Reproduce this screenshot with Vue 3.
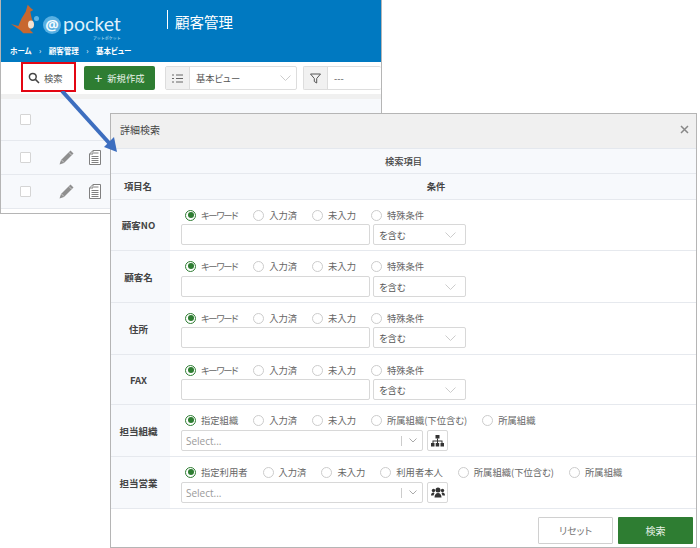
<script setup>
const keywordOptions = ['キーワード', '入力済', '未入力', '特殊条件']

const textRows = [
  { label: '顧客NO', height: 51, tall: false },
  { label: '顧客名', height: 52, tall: true },
  { label: '住所', height: 52, tall: false },
  { label: 'FAX', height: 50, tall: false }
]

const selectRows = [
  {
    label: '担当組織',
    height: 52,
    options: ['指定組織', '入力済', '未入力', '所属組織(下位含む)', '所属組織'],
    icon: 'tree'
  },
  {
    label: '担当営業',
    height: 52,
    options: ['指定利用者', '入力済', '未入力', '利用者本人', '所属組織(下位含む)', '所属組織'],
    icon: 'users'
  }
]

const listRows = [1, 2]
</script>

<template>
  <div class="canvas">
    <div class="window">
      <header class="top">
        <div class="brand">
          <svg class="roo" width="26" height="32" viewBox="0 0 26 32">
            <path d="M16.700 1.700L20 5.300L22.300 7L19.300 8.700L20.700 15.300L23.300 22L19 27L22.300 30.300L12.300 30.300L9 27L0 21L7.300 23L10.700 15.300L14.700 8.700L15.700 5.300Z" fill="#c8672f" />
            <ellipse cx="20" cy="21.500" rx="3" ry="4" fill="#f5e3d2" />
          </svg>
          <span class="at">@</span>
          <span class="logo-word">
            <span>pocket</span>
            <small>アットポケット</small>
          </span>
        </div>
        <h1 class="app-title">顧客管理</h1>
        <nav class="crumbs">
          <span>ホーム</span><i>›</i><span>顧客管理</span><i>›</i><span>基本ビュー</span>
        </nav>
      </header>

      <div class="toolbar">
        <button class="search-btn">
          <svg width="12" height="12" viewBox="0 0 12 12" fill="none" stroke="#444" stroke-width="1.5">
            <circle cx="4.800" cy="4.800" r="3.400" />
            <path d="M7.400 7.400L11 11" />
          </svg>
          検索
        </button>
        <button class="new-btn"><b>+</b>新規作成</button>
        <div class="view-select">
          <span class="addon">
            <svg width="11" height="9" viewBox="0 0 11 9" stroke="#666" fill="none"><path d="M0 1h2M4 1h7M0 4.500h2M4 4.500h7M0 8h2M4 8h7" /></svg>
          </span>
          <span class="view-name">基本ビュー</span>
          <svg class="chev" width="11" height="6" viewBox="0 0 11 6" fill="none" stroke="#ccc"><path d="M.5.500l5 5 5-5" /></svg>
        </div>
        <div class="filter-select">
          <span class="addon">
            <svg width="11" height="11" viewBox="0 0 11 11" fill="none" stroke="#555"><path d="M.5 1h10L6.700 5.500V10L4.300 8.500v-3z" /></svg>
          </span>
          <span class="view-name">---</span>
        </div>
      </div>

      <div class="list">
        <div class="list-head"><span class="check"></span></div>
        <div v-for="row in listRows" :key="row" class="list-row">
          <span class="check"></span>
          <svg class="pen" width="15" height="15" viewBox="0 0 15 15">
            <path d="M11.500.500l3 3-9.500 9.500-4.500 1.500 1.500-4.500z" fill="#8f8f8f" />
            <path d="M10 2.500l2.500 2.500M2.500 10l2.500 2.500" stroke="#e8e8e8" stroke-width=".7" />
          </svg>
          <svg width="12" height="15" viewBox="0 0 12 15" fill="#fff" stroke="#808080">
            <path d="M4 .500h7.500v14H.5V4z" />
            <path d="M4 .500V4H.5M5 3h4.500M2.500 6.500h7M2.500 8.500h7M2.500 10.500h7M2.500 12.500h7" fill="none" />
          </svg>
        </div>
      </div>
    </div>

    <div class="callout"></div>

    <svg class="arrow" width="66" height="66" viewBox="0 0 66 66">
      <path d="M3 0l48 53" stroke="#3d6ebf" stroke-width="4" fill="none" />
      <path d="M58 61l-13-5 10-10z" fill="#3d6ebf" />
    </svg>

    <section class="dialog">
      <div class="dialog-title">
        <span>詳細検索</span>
        <svg width="9" height="9" viewBox="0 0 9 9" stroke="#888" stroke-width="1.500"><path d="M1 1l7 7M8 1L1 8" /></svg>
      </div>
      <div class="band">検索項目</div>
      <div class="col-head">
        <span class="col-name">項目名</span>
        <span class="col-cond">条件</span>
      </div>

      <div
        v-for="row in textRows"
        :key="row.label"
        class="row"
        :class="{ tall: row.tall }"
        :style="{ height: row.height + 'px' }"
      >
        <div class="row-label">{{ row.label }}</div>
        <div class="row-body">
          <div class="radios">
            <label
              v-for="(opt, i) in keywordOptions"
              :key="opt"
              class="radio"
              :class="{ narrow: opt === 'キーワード' }"
            >
              <span class="dot" :class="{ on: i === 0 }"></span>{{ opt }}
            </label>
          </div>
          <div class="fields">
            <div class="input"></div>
            <div class="match">を含む
              <svg width="11" height="6" viewBox="0 0 11 6" fill="none" stroke="#ccc"><path d="M.5.500l5 5 5-5" /></svg>
            </div>
          </div>
        </div>
      </div>

      <div
        v-for="row in selectRows"
        :key="row.label"
        class="row tall"
        :style="{ height: row.height + 'px' }"
      >
        <div class="row-label">{{ row.label }}</div>
        <div class="row-body">
          <div class="radios">
            <label v-for="(opt, i) in row.options" :key="opt" class="radio">
              <span class="dot" :class="{ on: i === 0 }"></span>{{ opt }}
            </label>
          </div>
          <div class="fields">
            <div class="picker">
              <span>Select...</span>
              <em></em>
              <svg width="8" height="5" viewBox="0 0 8 5" fill="none" stroke="#aaa"><path d="M.5.500L4 4 7.500.500" /></svg>
            </div>
            <button class="pick-btn">
              <svg v-if="row.icon === 'tree'" width="13" height="12" viewBox="0 0 13 12" fill="#333">
                <rect x="4.500" y="0" width="4" height="3.500" />
                <path d="M6 3.500h1V5.500h4.500V8h-1V6.500H7V8H6V6.500H2.500V8h-1V5.500H6z" />
                <rect x="0" y="8" width="3.500" height="3.500" />
                <rect x="4.700" y="8" width="3.500" height="3.500" />
                <rect x="9.500" y="8" width="3.500" height="3.500" />
              </svg>
              <svg v-else width="14" height="11" viewBox="0 0 14 11" fill="#333">
                <circle cx="7" cy="3" r="2.500" />
                <circle cx="2.500" cy="3.500" r="1.700" />
                <circle cx="11.500" cy="3.500" r="1.700" />
                <path d="M3.500 10.500c0-3 1.500-4.500 3.500-4.500s3.500 1.500 3.500 4.500zM0 8.500c0-2 1-3 2.500-3l1 .5-1 2.500zM14 8.500c0-2-1-3-2.500-3l-1 .5 1 2.500z" />
              </svg>
            </button>
          </div>
        </div>
      </div>

      <footer class="dialog-foot">
        <button class="reset">リセット</button>
        <button class="go">検索</button>
      </footer>
    </section>
  </div>
</template>

<style>
html,
body {
  margin: 0;
  background: #fff;
}
</style>

<style scoped>
.canvas {
  position: relative;
  width: 700px;
  height: 548px;
  overflow: hidden;
  background: #fff;
  font-family: "Noto Sans CJK JP", "Noto Sans", sans-serif;
  font-feature-settings: "palt";
  font-size: 9.3px;
  color: #555;
}

button {
  font-family: inherit;
  font-feature-settings: inherit;
  cursor: pointer;
}

.window {
  position: absolute;
  left: 0;
  top: 0;
  width: 382px;
  height: 214px;
  border-left: 1px solid #b5b5b5;
  border-right: 1px solid #b5b5b5;
  border-bottom: 1px solid #b5b5b5;
  box-sizing: border-box;
  overflow: hidden;
}

.top {
  height: 62px;
  background: #0079c1;
  color: #fff;
  display: grid;
  grid-template-columns: 166px auto;
  grid-template-rows: 42px 20px;
}

.brand {
  position: relative;
  display: flex;
  align-items: flex-start;
  padding: 3px 0 0 10px;
}

.brand::before {
  content: "";
  position: absolute;
  left: 33px;
  top: 16px;
  width: 5px;
  height: 5px;
  border-radius: 50%;
  background: #5db4e4;
}

.at {
  margin: 13px 0 0 6px;
  width: 18px;
  height: 18px;
  text-align: center;
  border-radius: 50%;
  background: #58b0e2;
  color: #f2fafe;
  font: 700 15px/17px "Noto Sans", sans-serif;
}

.logo-word {
  margin: 11px 0 0 2px;
  display: flex;
  flex-direction: column;
  align-items: flex-end;
  font: 400 19.500px/20px "Lato", sans-serif;
  color: #dff0fa;
}

.logo-word small {
  margin-top: 2px;
  font-family: "Noto Sans CJK JP", sans-serif;
  font-size: 4px;
  line-height: 4px;
  white-space: nowrap;
}

.app-title {
  margin: 10px 0 0 0;
  height: 19px;
  padding-left: 7px;
  border-left: 1px solid #fff;
  font-size: 14.500px;
  font-weight: 400;
  line-height: 23px;
  justify-self: start;
  font-feature-settings: normal;
}

.crumbs {
  grid-column: 1 / 3;
  display: flex;
  align-items: center;
  padding: 1px 0 0 9px;
  font-size: 7.500px;
  font-weight: 700;
  height: 14px;
}

.crumbs i {
  margin: 0 7.500px;
  font-style: normal;
  font-weight: 400;
}

.toolbar {
  height: 32px;
  padding-top: 4px;
  box-sizing: border-box;
  display: flex;
  align-items: flex-start;
}

.search-btn {
  margin-left: 27px;
  width: 46px;
  height: 24px;
  padding: 0;
  border: 0;
  background: #fff;
  color: #555;
  font-size: 9.300px;
  display: flex;
  align-items: center;
  gap: 4px;
}

.new-btn {
  margin-left: 10px;
  width: 71px;
  height: 24px;
  padding: 0;
  border: 0;
  border-radius: 2px;
  background: #2e7d32;
  color: #eaf3ea;
  font-size: 9.300px;
  display: flex;
  align-items: center;
  justify-content: center;
  gap: 5px;
}

.new-btn b {
  font-size: 14px;
  font-weight: 400;
  line-height: 14px;
}

.view-select,
.filter-select {
  height: 24px;
  box-sizing: border-box;
  border: 1px solid #ddd;
  border-radius: 2px;
  display: flex;
  align-items: center;
  background: #fff;
}

.view-select {
  margin-left: 10px;
  width: 132px;
}

.filter-select {
  margin-left: 6px;
  flex: 1;
  border-right: 0;
}

.addon {
  width: 23px;
  height: 22px;
  background: #f1f1f1;
  border-right: 1px solid #ddd;
  display: flex;
  align-items: center;
  justify-content: center;
  flex: none;
}

.view-name {
  flex: 1;
  padding-left: 6px;
  color: #555;
}

.chev {
  margin-right: 5px;
}

.list {
  border-top: 5px solid #f0f0f0;
  background: #f7f9fc;
}

.list-head {
  height: 42px;
  box-sizing: border-box;
  padding-left: 19px;
  display: flex;
  align-items: center;
  border-bottom: 1px solid #e6e9ee;
}

.list-row {
  height: 34px;
  box-sizing: border-box;
  padding-left: 19px;
  display: flex;
  align-items: center;
  border-bottom: 1px solid #e6e9ee;
}

.check {
  width: 11px;
  height: 11px;
  box-sizing: border-box;
  border: 1px solid #d5d5d5;
  border-radius: 1px;
  background: #fff;
  flex: none;
}

.pen {
  margin-left: 28px;
  margin-right: 15px;
}

.callout {
  position: absolute;
  left: 21px;
  top: 62px;
  width: 55px;
  height: 30px;
  box-sizing: border-box;
  border: 2px solid #e30613;
}

.arrow {
  position: absolute;
  left: 59px;
  top: 91px;
  z-index: 3;
}

.dialog {
  position: absolute;
  left: 110px;
  top: 113px;
  width: 587px;
  height: 435px;
  box-sizing: border-box;
  border: 1px solid #b5b5b5;
  background: #fff;
  z-index: 2;
  display: flex;
  flex-direction: column;
}

.dialog-title {
  height: 35px;
  box-sizing: border-box;
  flex: none;
  padding: 0 7px 3px 9px;
  background: #f0f0f0;
  border-bottom: 1px solid #e4e8ee;
  display: flex;
  align-items: center;
  justify-content: space-between;
  color: #444;
  font-size: 10px;
}

.band {
  height: 25px;
  flex: none;
  background: #f7f9fc;
  border-bottom: 1px solid #e6e9ee;
  display: flex;
  align-items: center;
  justify-content: center;
  font-weight: 500;
  color: #444;
  box-sizing: border-box;
}

.col-head {
  height: 26px;
  flex: none;
  padding-bottom: 2px;
  background: #f7f9fc;
  border-bottom: 1px solid #e6e9ee;
  box-sizing: border-box;
  display: grid;
  grid-template-columns: 59px 1fr;
  align-items: center;
  font-weight: 700;
  color: #444;
}

.col-name {
  padding-left: 13px;
}

.col-cond {
  text-align: center;
  padding-left: 6px;
}

.row {
  flex: none;
  box-sizing: border-box;
  border-bottom: 1px solid #e6e9ee;
  display: grid;
  grid-template-columns: 59px 1fr;
}

.row-label {
  background: #f7f9fc;
  display: flex;
  align-items: center;
  justify-content: center;
  padding-right: 4px;
  font-weight: 700;
  color: #444;
  font-size: 9.500px;
}

.row-body {
  padding: 8px 0 0 11px;
}

.radios {
  display: flex;
  height: 14px;
  padding-left: 4px;
  gap: 15px;
  align-items: center;
  margin-bottom: 2px;
}

.tall .radios {
  margin-bottom: 3px;
}

.radio {
  display: flex;
  align-items: center;
  gap: 5px;
  white-space: nowrap;
  color: #666;
}

.radio.narrow {
  letter-spacing: -1.300px;
  margin-right: 1px;
}

.dot {
  position: relative;
  width: 11px;
  height: 11px;
  box-sizing: border-box;
  border: 1px solid #ccc;
  border-radius: 50%;
  background: #fff;
  flex: none;
}

.dot.on {
  border-color: #2e7d32;
}

.dot.on::after {
  content: "";
  position: absolute;
  left: 1.500px;
  top: 1.500px;
  width: 6px;
  height: 6px;
  border-radius: 50%;
  background: #2e7d32;
}

.fields {
  display: flex;
  gap: 3px;
  align-items: stretch;
  height: 21px;
}

.input {
  width: 189px;
  box-sizing: border-box;
  border: 1px solid #d8d8d8;
  border-radius: 2px;
}

.match {
  width: 93px;
  box-sizing: border-box;
  border: 1px solid #d8d8d8;
  border-radius: 2px;
  padding: 0 9px 0 5px;
  display: flex;
  align-items: center;
  justify-content: space-between;
  color: #555;
}

.picker {
  width: 242px;
  box-sizing: border-box;
  border: 1px solid #d8d8d8;
  border-radius: 2px;
  padding: 0 5px 0 4px;
  display: flex;
  align-items: center;
  color: #9a9a9a;
  font-family: "Open Sans", sans-serif;
  font-size: 10px;
}

.picker span {
  flex: 1;
}

.picker em {
  width: 1px;
  height: 10px;
  background: #ccc;
  margin-right: 7px;
}

.pick-btn {
  width: 21px;
  margin-left: 1px;
  padding: 0;
  border: 1px solid #d8d8d8;
  border-radius: 2px;
  background: #fff;
  display: flex;
  align-items: center;
  justify-content: center;
}

.dialog-foot {
  flex: 1;
  padding: 8px 3px 0 0;
  display: flex;
  justify-content: flex-end;
  align-items: flex-start;
  gap: 5px;
}

.reset,
.go {
  width: 75px;
  height: 27px;
  border-radius: 1px;
  font-size: 10px;
  padding: 0;
}

.reset {
  border: 1px solid #d0d0d0;
  background: #fff;
  color: #777;
}

.go {
  border: 0;
  background: #2e7d32;
  color: #e8f2e8;
}
</style>
